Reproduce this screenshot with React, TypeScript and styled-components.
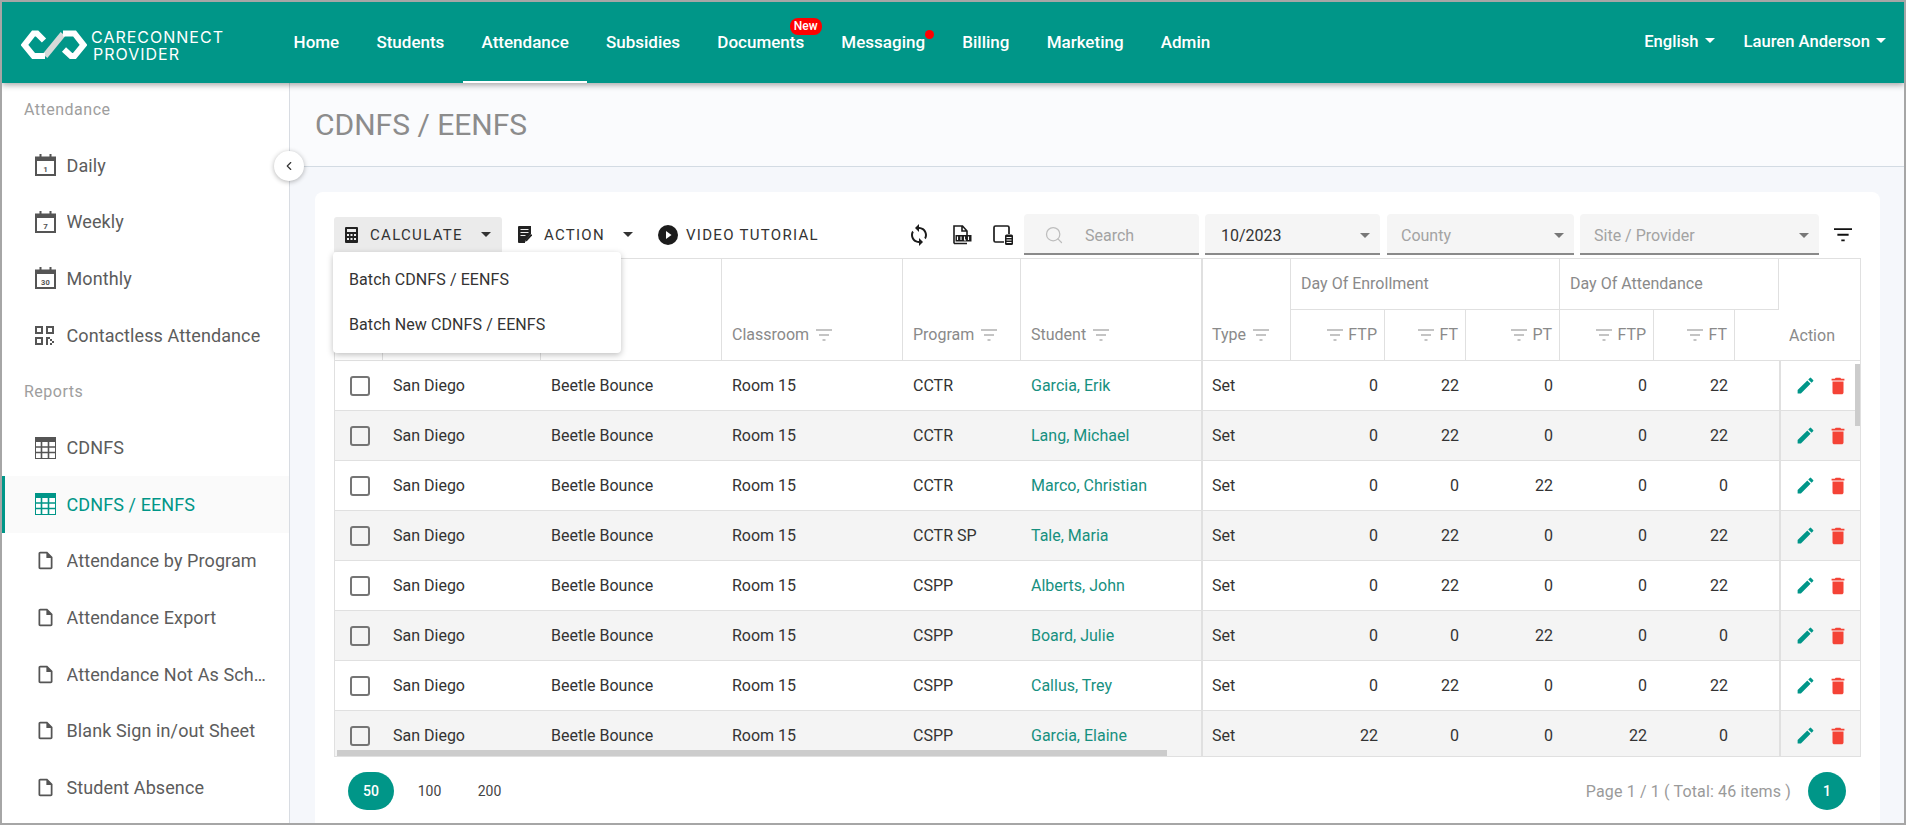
import React from 'react';
import styled, { createGlobalStyle } from 'styled-components';
import { MdDelete, MdEdit, MdOutlineInsertDriveFile, MdSync } from 'react-icons/md';
import { ChevronLeft, Search } from 'lucide-react';

const teal = '#009688';
const lineColor = '#e0e0e0';

const GlobalStyle = createGlobalStyle`
  html, body {
    margin: 0;
    padding: 0;
    background: #fff;
  }
  body {
    font-family: Roboto, "Liberation Sans", sans-serif;
    overflow: hidden;
  }
  * {
    box-sizing: border-box;
  }
`;

const Frame = styled.div`
  width: 1906px;
  height: 825px;
  border: 2px solid #a6a6a6;
  display: flex;
  flex-direction: column;
  overflow: hidden;
`;

const Header = styled.header`
  height: 81px;
  flex: none;
  background: ${teal};
  display: flex;
  align-items: stretch;
  box-shadow: 0 2px 6px rgba(0, 0, 0, 0.35);
  position: relative;
  z-index: 3;
`;

const Logo = styled.div`
  width: 273px;
  flex: none;
  display: flex;
  align-items: center;
  gap: 4px;
  padding: 5px 0 0 19px;
  color: #fff;
`;

const LogoText = styled.div`
  font-family: Inter, "Open Sans", sans-serif;
  font-size: 16px;
  line-height: 17px;
  letter-spacing: 1px;
  font-weight: 400;
  white-space: nowrap;
  padding-top: 2px;
  & > div + div {
    padding-left: 2px;
  }
`;

const Nav = styled.nav`
  display: flex;
  flex: 1;
`;

const NavItem = styled.a<{ $active?: boolean }>`
  position: relative;
  display: flex;
  align-items: flex-start;
  padding: 29px 18.6px 0;
  height: 81px;
  color: #fff;
  font-size: 17px;
  line-height: 22px;
  font-weight: 500;
  border-bottom: 2px solid ${(p) => (p.$active ? '#fff' : 'transparent')};
`;

const NewBadge = styled.span`
  position: absolute;
  top: 16px;
  right: 1px;
  height: 17px;
  width: 32px;
  border-radius: 8px;
  background: #f00;
  color: #fff;
  font-size: 12px;
  line-height: 17px;
  text-align: center;
`;

const Dot = styled.span`
  position: absolute;
  top: 28px;
  right: 10px;
  width: 9px;
  height: 9px;
  border-radius: 50%;
  background: #f00;
`;

const UserMenu = styled.div<{ $gap: number }>`
  display: flex;
  align-items: flex-start;
  gap: 6px;
  padding-top: 29px;
  margin-right: ${(p) => p.$gap}px;
  color: #fff;
  font-size: 16.6px;
  line-height: 22px;
  font-weight: 500;
`;

const Caret = styled.span<{ $color?: string; $size?: number }>`
  display: inline-block;
  flex: none;
  width: 0;
  height: 0;
  border-left: ${(p) => p.$size ?? 5}px solid transparent;
  border-right: ${(p) => p.$size ?? 5}px solid transparent;
  border-top: ${(p) => p.$size ?? 5}px solid ${(p) => p.$color ?? '#fff'};
`;

const NavCaret = styled(Caret)`
  margin-top: 7px;
`;

const Body = styled.div`
  flex: 1;
  display: flex;
  min-height: 0;
  position: relative;
`;

const Sidebar = styled.aside`
  width: 288px;
  flex: none;
  background: #fff;
  border-right: 1px solid #d8dce2;
  overflow: hidden;
`;

const SideLabel = styled.div<{ $top?: number }>`
  height: 54px;
  margin-top: ${(p) => p.$top ?? 0}px;
  padding: 0 0 2px 22px;
  display: flex;
  align-items: center;
  color: #9e9e9e;
  font-size: 16px;
  letter-spacing: 0.5px;
`;

const SideItem = styled.a<{ $active?: boolean }>`
  height: 56.6px;
  display: flex;
  align-items: center;
  padding-left: ${(p) => (p.$active ? 30 : 33)}px;
  border-left: ${(p) => (p.$active ? `3px solid ${teal}` : 'none')};
  background: ${(p) => (p.$active ? '#fafafa' : 'transparent')};
  color: ${(p) => (p.$active ? teal : '#5c5c5c')};
  font-size: 18px;
  letter-spacing: 0.1px;
`;

const SideIcon = styled.span`
  width: 31.5px;
  flex: none;
  display: flex;
  svg {
    display: block;
  }
`;

const SideText = styled.span`
  width: 202px;
  white-space: nowrap;
  overflow: hidden;
  text-overflow: ellipsis;
`;

const CollapseButton = styled.button`
  position: absolute;
  left: 272px;
  top: 68px;
  width: 30px;
  height: 30px;
  padding: 0;
  border: none;
  border-radius: 50%;
  background: #fff;
  color: #333;
  display: flex;
  align-items: center;
  justify-content: center;
  box-shadow: 0 1px 5px rgba(0, 0, 0, 0.3);
`;

const Main = styled.main`
  flex: 1;
  min-width: 0;
  background: #f5f7fb;
  display: flex;
  flex-direction: column;
`;

const TitleBar = styled.div`
  height: 84px;
  flex: none;
  background: #fafbfd;
  border-bottom: 1px solid #d3dbe3;
  padding: 0 25px 0 25px;
  display: flex;
  align-items: center;
`;

const PageTitle = styled.h1`
  margin: 0;
  font-size: 30px;
  font-weight: 400;
  color: #8c8c8c;
`;

const Card = styled.section`
  flex: 1;
  margin: 25px 24px 0 25px;
  padding: 22px 19px 0;
  background: #fff;
  border-radius: 8px 8px 0 0;
`;

const Toolbar = styled.div`
  height: 44px;
  display: flex;
  align-items: flex-start;
`;

const MenuWrap = styled.div<{ $left?: number }>`
  position: relative;
  margin: 3px 0 0 ${(p) => p.$left ?? 0}px;
`;

const ToolButton = styled.button<{ $open?: boolean; $left?: number; $gap?: number }>`
  height: 35px;
  display: flex;
  align-items: center;
  border: none;
  border-radius: 3px 3px 0 0;
  padding: 0 11px 0 ${(p) => p.$left ?? 11}px;
  gap: ${(p) => p.$gap ?? 12}px;
  background: ${(p) => (p.$open ? '#ebebeb' : 'transparent')};
  color: #333;
  font-family: inherit;
  font-size: 15px;
  letter-spacing: 1.3px;
  text-transform: uppercase;
  white-space: nowrap;
`;

const ToolCaret = styled(Caret)`
  margin-left: 6px;
`;

const Dropdown = styled.div`
  position: absolute;
  top: 35px;
  left: -1px;
  width: 288px;
  padding: 6px 0;
  background: #fff;
  border-radius: 4px;
  box-shadow: 0 2px 6px rgba(0, 0, 0, 0.25);
  z-index: 2;
`;

const DropdownItem = styled.a`
  display: block;
  height: 44.5px;
  padding: 0 16px;
  line-height: 44.5px;
  color: #333;
  font-size: 16px;
  letter-spacing: 0.1px;
`;

const IconGroup = styled.div`
  display: flex;
  align-items: center;
  height: 41px;
  margin: 0 11px 0 77px;
  color: #1c1c1c;
  svg {
    display: block;
  }
  & > * + * {
    margin-left: 21px;
  }
`;

const Field = styled.div<{ $width: number; $gap?: number; $left?: number }>`
  width: ${(p) => p.$width}px;
  height: 41px;
  flex: none;
  margin-right: ${(p) => p.$gap ?? 6}px;
  background: #f5f5f5;
  border-bottom: 2px solid #8a8a8a;
  border-radius: 4px 4px 0 0;
  display: flex;
  align-items: center;
  justify-content: space-between;
  padding: 3px 10px 0 ${(p) => p.$left ?? 14}px;
  font-size: 16px;
  color: #333;
`;

const Placeholder = styled.span`
  color: #a3a3a3;
`;

const SearchField = styled(Field)`
  justify-content: flex-start;
  gap: 21px;
  color: #bdbdbd;
`;

const FilterButton = styled.div`
  margin: 14px 0 0 9px;
  color: #111;
  svg {
    display: block;
  }
`;

const TableBox = styled.div`
  position: relative;
  width: 1527px;
  height: 499px;
  border: 1px solid ${lineColor};
  overflow: hidden;
`;

const Grid = styled.table`
  width: 1525px;
  table-layout: fixed;
  border-collapse: separate;
  border-spacing: 0;
  font-size: 16px;
`;

const HeadCell = styled.th<{ $right?: boolean; $thick?: boolean; $plain?: boolean }>`
  height: 51px;
  padding: 0 ${(p) => (p.$right ? 7 : 10)}px 0 ${(p) => (p.$thick ? 9 : 10)}px;
  border-bottom: 1px solid ${lineColor};
  border-right: ${(p) => (p.$plain ? 'none' : `1px solid ${lineColor}`)};
  border-left: ${(p) => (p.$thick ? `2px solid ${lineColor}` : 'none')};
  text-align: ${(p) => (p.$right ? 'right' : 'left')};
  font-weight: 400;
  color: #8a8a8a;
  white-space: nowrap;
`;

const GroupHeadCell = styled(HeadCell)`
  padding-bottom: 2px;
`;

const TallHeadCell = styled(HeadCell)`
  vertical-align: bottom;
  padding-bottom: 15px;
`;

const ActionHeadCell = styled(TallHeadCell)`
  text-align: center;
  padding-right: 26px;
`;

const HeadLabel = styled.span<{ $gap: number }>`
  display: inline-flex;
  align-items: center;
  gap: ${(p) => p.$gap}px;
  line-height: 20px;
`;

const Row = styled.tr<{ $shaded: boolean }>`
  background: ${(p) => (p.$shaded ? '#f4f4f4' : '#fff')};
`;

const Cell = styled.td<{ $right?: boolean; $thick?: boolean }>`
  height: 50px;
  padding: 0 ${(p) => (p.$right ? 7 : 10)}px 0 ${(p) => (p.$thick ? 9 : 10)}px;
  border-bottom: 1px solid ${lineColor};
  border-left: ${(p) => (p.$thick ? `2px solid ${lineColor}` : 'none')};
  text-align: ${(p) => (p.$right ? 'right' : 'left')};
  color: #333;
  white-space: nowrap;
`;

const CheckCell = styled(Cell)`
  padding-left: 15px;
`;

const Checkbox = styled.span`
  display: block;
  width: 20px;
  height: 20px;
  border: 2px solid #757575;
  border-radius: 3px;
`;

const StudentLink = styled.a`
  color: #17907f;
`;

const ActionCell = styled(Cell)`
  padding: 0 0 0 14px;
`;

const ActionIcons = styled.div`
  display: flex;
  align-items: center;
  gap: 11px;
  svg {
    display: block;
  }
`;

const ScrollThumb = styled.div<{ $vertical?: boolean }>`
  position: absolute;
  background: #cccccc;
  ${(p) =>
    p.$vertical
      ? 'right: 0; top: 105px; width: 5px; height: 62px;'
      : 'left: 2px; bottom: 0; height: 6px; width: 830px;'}
`;

const Footer = styled.div`
  display: flex;
  align-items: center;
  justify-content: space-between;
  padding: 15px 15px 0 14px;
`;

const PageSizes = styled.div`
  display: flex;
  gap: 11px;
`;

const PageSize = styled.a<{ $active?: boolean }>`
  width: ${(p) => (p.$active ? 46 : 49)}px;
  height: 38px;
  border-radius: 19px;
  background: ${(p) => (p.$active ? teal : 'transparent')};
  color: ${(p) => (p.$active ? '#fff' : '#444')};
  font-size: 14px;
  font-weight: ${(p) => (p.$active ? 500 : 400)};
  line-height: 38px;
  text-align: center;
`;

const Pager = styled.div`
  display: flex;
  align-items: center;
  gap: 17px;
  color: #9a9a9a;
  font-size: 16px;
  letter-spacing: 0.15px;
`;

const PageNumber = styled.a`
  width: 38px;
  height: 38px;
  border-radius: 50%;
  background: ${teal};
  color: #fff;
  font-size: 14px;
  font-weight: 500;
  line-height: 38px;
  text-align: center;
`;

const LogoMark = () => (
  <svg width="66" height="30" viewBox="0 0 66 30" fill="none">
    <path d="M24 26 L42 4" stroke="#d5dad9" strokeWidth="6" />
    <path d="M23 10.5 L16 3.5 L12.5 3.5 L3.5 15 L12.5 26 L24 26" stroke="#fff" strokeWidth="6" />
    <path d="M43 19.5 L50 26 L53.5 26 L62.5 15 L53.5 3.5 L42 3.5" stroke="#fff" strokeWidth="6" />
  </svg>
);

const CalendarIcon: React.FC<{ day: string }> = ({ day }) => (
  <svg width="21" height="22" viewBox="0 0 21 22">
    <rect x="1" y="3.5" width="19" height="17.5" fill="none" stroke="#555" strokeWidth="2" />
    <rect x="1" y="3" width="19" height="4" fill="#555" />
    <rect x="4.5" y="0" width="2" height="4" fill="#555" />
    <rect x="14.5" y="0" width="2" height="4" fill="#555" />
    <text x="10.5" y="17.5" textAnchor="middle" fontSize={day.length > 1 ? 7.5 : 8} fontWeight="700" fill="#555" fontFamily="Roboto, sans-serif">
      {day}
    </text>
  </svg>
);

const QrIcon = () => (
  <svg width="19" height="19" viewBox="0 0 19 19" fill="#555">
    <path d="M0 0h8v8H0zM2 2v4h4V2z" fillRule="evenodd" />
    <path d="M11 0h8v8h-8zM13 2v4h4V2z" fillRule="evenodd" />
    <path d="M0 11h8v8H0zM2 13v4h4v-4z" fillRule="evenodd" />
    <path d="M11 11h4v2h-2v6h-2zM15 13h2v2h-2zM17 15h2v2h-2zM15 17h2v2h-2z" />
  </svg>
);

const TableIcon: React.FC<{ color: string }> = ({ color }) => (
  <svg width="21" height="22" viewBox="0 0 21 22" fill="none">
    <rect x="0.5" y="0.5" width="20" height="21" fill="#fff" stroke={color} />
    <rect x="0" y="0" width="21" height="5" fill={color} />
    <path d="M0 10h21M0 15.5h21M6.5 5v17M13.5 5v17" stroke={color} strokeWidth="1.6" />
  </svg>
);

const FilterLines: React.FC<{ size?: number; width?: number }> = ({ size = 16, width = 1.2 }) => (
  <svg width={size} height={size * 0.75} viewBox="0 0 16 12" stroke="currentColor" strokeWidth={width} fill="none">
    <path d="M0 1h16M3 6h10M6.5 11h3" />
  </svg>
);

const CalculatorIcon = () => (
  <svg width="13" height="16" viewBox="0 0 13 16">
    <rect width="13" height="16" rx="1" fill="#222" />
    <rect x="2" y="2" width="9" height="3" fill="#eee" />
    <path d="M2 7h2v2H2zM5.5 7h2v2h-2zM9 7h2v2H9zM2 11h2v2H2zM5.5 11h2v2h-2zM9 11h2v2H9z" fill="#eee" />
  </svg>
);

const NoteIcon = () => (
  <svg width="14" height="17" viewBox="0 0 14 17">
    <path d="M1 0h12v8l-6 7v2H1a1 1 0 0 1-1-1V1a1 1 0 0 1 1-1z" fill="#222" />
    <path d="M2.5 3.5h8M2.5 6.5h8M2.5 9.5h5" stroke="#eee" strokeWidth="1.2" />
    <path d="M13 8l1.2 1.2L9 15l-2 .8.6-2z" fill="#222" />
  </svg>
);

const PlayIcon = () => (
  <svg width="20" height="20" viewBox="0 0 20 20">
    <circle cx="10" cy="10" r="10" fill="#1c1c1c" />
    <path d="M8 6l5.5 4L8 14z" fill="#fff" />
  </svg>
);

const XlsIcon = () => (
  <svg width="20" height="20" viewBox="0 0 20 20" fill="none">
    <path d="M2 18.5V1h8.5L15 6v4M10 1v5h5M2 18.5h13" stroke="#1c1c1c" strokeWidth="1.6" />
    <rect x="3.5" y="10" width="16" height="6.5" fill="#1c1c1c" />
    <path d="M5.5 11.5v3.5M9 11.5v3.5M12.5 11.5v3.5h1.5M16.5 11.5v3.5" stroke="#fff" strokeWidth="1.1" />
  </svg>
);

const DeviceIcon = () => (
  <svg width="20" height="20" viewBox="0 0 20 20" fill="none">
    <path d="M11 17H2.5A1.5 1.5 0 0 1 1 15.5V2.5A1.5 1.5 0 0 1 2.5 1h12A1.5 1.5 0 0 1 16 2.5V9" stroke="#1c1c1c" strokeWidth="1.7" />
    <rect x="12" y="9.5" width="8" height="10.5" rx="1.5" fill="#1c1c1c" />
    <path d="M13.5 12.5h5M13.5 15h5M13.5 17.5h5" stroke="#fff" strokeWidth="1" />
  </svg>
);

const numbers = ['ftpE', 'ftE', 'ptE', 'ftpA', 'ftA'] as const;

interface RowData {
  program: string;
  student: string;
  ftpE: number;
  ftE: number;
  ptE: number;
  ftpA: number;
  ftA: number;
}

const rows: RowData[] = [
  { program: 'CCTR', student: 'Garcia, Erik', ftpE: 0, ftE: 22, ptE: 0, ftpA: 0, ftA: 22 },
  { program: 'CCTR', student: 'Lang, Michael', ftpE: 0, ftE: 22, ptE: 0, ftpA: 0, ftA: 22 },
  { program: 'CCTR', student: 'Marco, Christian', ftpE: 0, ftE: 0, ptE: 22, ftpA: 0, ftA: 0 },
  { program: 'CCTR SP', student: 'Tale, Maria', ftpE: 0, ftE: 22, ptE: 0, ftpA: 0, ftA: 22 },
  { program: 'CSPP', student: 'Alberts, John', ftpE: 0, ftE: 22, ptE: 0, ftpA: 0, ftA: 22 },
  { program: 'CSPP', student: 'Board, Julie', ftpE: 0, ftE: 0, ptE: 22, ftpA: 0, ftA: 0 },
  { program: 'CSPP', student: 'Callus, Trey', ftpE: 0, ftE: 22, ptE: 0, ftpA: 0, ftA: 22 },
  { program: 'CSPP', student: 'Garcia, Elaine', ftpE: 22, ftE: 0, ptE: 0, ftpA: 22, ftA: 0 }
];

const columnWidths = [48, 158, 181, 181, 118, 180, 90, 94, 81, 94, 94, 81, 44, 81];

const navItems = ['Home', 'Students', 'Attendance', 'Subsidies', 'Documents', 'Messaging', 'Billing', 'Marketing', 'Admin'];

const fileReports = [
  'Attendance by Program',
  'Attendance Export',
  'Attendance Not As Scheduled',
  'Blank Sign in/out Sheet',
  'Student Absence'
];

const FilterHead: React.FC<{ label: string; before?: boolean }> = ({ label, before }) => (
  <HeadLabel $gap={before ? 5 : 7}>
    {before && <FilterLines />}
    {label}
    {!before && <FilterLines />}
  </HeadLabel>
);

const App: React.FC = () => {
  return (
    <>
      <GlobalStyle />
      <Frame>
        <Header>
          <Logo>
            <LogoMark />
            <LogoText>
              <div>CARECONNECT</div>
              <div>PROVIDER</div>
            </LogoText>
          </Logo>
          <Nav>
            {navItems.map((item) => (
              <NavItem key={item} $active={item === 'Attendance'}>
                {item}
                {item === 'Documents' && <NewBadge>New</NewBadge>}
                {item === 'Messaging' && <Dot />}
              </NavItem>
            ))}
          </Nav>
          <UserMenu $gap={29}>
            English
            <NavCaret />
          </UserMenu>
          <UserMenu $gap={18}>
            Lauren Anderson
            <NavCaret />
          </UserMenu>
        </Header>
        <Body>
          <Sidebar>
            <SideLabel>Attendance</SideLabel>
            <SideItem>
              <SideIcon><CalendarIcon day="1" /></SideIcon>
              <SideText>Daily</SideText>
            </SideItem>
            <SideItem>
              <SideIcon><CalendarIcon day="7" /></SideIcon>
              <SideText>Weekly</SideText>
            </SideItem>
            <SideItem>
              <SideIcon><CalendarIcon day="30" /></SideIcon>
              <SideText>Monthly</SideText>
            </SideItem>
            <SideItem>
              <SideIcon><QrIcon /></SideIcon>
              <SideText>Contactless Attendance</SideText>
            </SideItem>
            <SideLabel $top={2}>Reports</SideLabel>
            <SideItem>
              <SideIcon><TableIcon color="#555" /></SideIcon>
              <SideText>CDNFS</SideText>
            </SideItem>
            <SideItem $active>
              <SideIcon><TableIcon color={teal} /></SideIcon>
              <SideText>CDNFS / EENFS</SideText>
            </SideItem>
            {fileReports.map((report) => (
              <SideItem key={report}>
                <SideIcon><MdOutlineInsertDriveFile size={21} color="#555" /></SideIcon>
                <SideText>{report}</SideText>
              </SideItem>
            ))}
          </Sidebar>
          <CollapseButton>
            <ChevronLeft size={14} strokeWidth={2} />
          </CollapseButton>
          <Main>
            <TitleBar>
              <PageTitle>CDNFS / EENFS</PageTitle>
            </TitleBar>
            <Card>
              <Toolbar>
                <MenuWrap>
                  <ToolButton $open>
                    <CalculatorIcon />
                    Calculate
                    <ToolCaret $color="#333" />
                  </ToolButton>
                  <Dropdown>
                    <DropdownItem>Batch CDNFS / EENFS</DropdownItem>
                    <DropdownItem>Batch New CDNFS / EENFS</DropdownItem>
                  </Dropdown>
                </MenuWrap>
                <MenuWrap $left={5}>
                  <ToolButton>
                    <NoteIcon />
                    Action
                    <ToolCaret $color="#333" />
                  </ToolButton>
                </MenuWrap>
                <MenuWrap>
                  <ToolButton $left={14} $gap={8}>
                    <PlayIcon />
                    Video Tutorial
                  </ToolButton>
                </MenuWrap>
                <IconGroup>
                  <MdSync size={24} />
                  <XlsIcon />
                  <DeviceIcon />
                </IconGroup>
                <SearchField $width={175} $left={20}>
                  <Search size={20} strokeWidth={1.5} />
                  <Placeholder>Search</Placeholder>
                </SearchField>
                <Field $width={175} $gap={7} $left={16}>
                  10/2023
                  <Caret $color="#777" />
                </Field>
                <Field $width={187}>
                  <Placeholder>County</Placeholder>
                  <Caret $color="#777" />
                </Field>
                <Field $width={239}>
                  <Placeholder>Site / Provider</Placeholder>
                  <Caret $color="#777" />
                </Field>
                <FilterButton>
                  <FilterLines size={18} width={1.6} />
                </FilterButton>
              </Toolbar>
              <TableBox>
                <Grid>
                  <colgroup>
                    {columnWidths.map((w, i) => (
                      <col key={i} width={w} />
                    ))}
                  </colgroup>
                  <thead>
                    <tr>
                      <TallHeadCell rowSpan={2} />
                      <TallHeadCell rowSpan={2} />
                      <TallHeadCell rowSpan={2} />
                      <TallHeadCell rowSpan={2}><FilterHead label="Classroom" /></TallHeadCell>
                      <TallHeadCell rowSpan={2}><FilterHead label="Program" /></TallHeadCell>
                      <TallHeadCell rowSpan={2} $plain><FilterHead label="Student" /></TallHeadCell>
                      <TallHeadCell rowSpan={2} $thick><FilterHead label="Type" /></TallHeadCell>
                      <GroupHeadCell colSpan={3}>Day Of Enrollment</GroupHeadCell>
                      <GroupHeadCell colSpan={3}>Day Of Attendance</GroupHeadCell>
                      <ActionHeadCell rowSpan={2} $plain>Action</ActionHeadCell>
                    </tr>
                    <tr>
                      <HeadCell $right><FilterHead label="FTP" before /></HeadCell>
                      <HeadCell $right><FilterHead label="FT" before /></HeadCell>
                      <HeadCell $right><FilterHead label="PT" before /></HeadCell>
                      <HeadCell $right><FilterHead label="FTP" before /></HeadCell>
                      <HeadCell $right><FilterHead label="FT" before /></HeadCell>
                      <HeadCell $plain />
                    </tr>
                  </thead>
                  <tbody>
                    {rows.map((row, i) => (
                      <Row key={row.student} $shaded={i % 2 === 1}>
                        <CheckCell><Checkbox /></CheckCell>
                        <Cell>San Diego</Cell>
                        <Cell>Beetle Bounce</Cell>
                        <Cell>Room 15</Cell>
                        <Cell>{row.program}</Cell>
                        <Cell><StudentLink>{row.student}</StudentLink></Cell>
                        <Cell $thick>Set</Cell>
                        {numbers.map((key) => (
                          <Cell key={key} $right>{row[key]}</Cell>
                        ))}
                        <Cell />
                        <ActionCell $thick>
                          <ActionIcons>
                            <MdEdit size={21} color={teal} />
                            <MdDelete size={22} color="#f44336" />
                          </ActionIcons>
                        </ActionCell>
                      </Row>
                    ))}
                  </tbody>
                </Grid>
                <ScrollThumb $vertical />
                <ScrollThumb />
              </TableBox>
              <Footer>
                <PageSizes>
                  <PageSize $active>50</PageSize>
                  <PageSize>100</PageSize>
                  <PageSize>200</PageSize>
                </PageSizes>
                <Pager>
                  Page 1 / 1 ( Total: 46 items )
                  <PageNumber>1</PageNumber>
                </Pager>
              </Footer>
            </Card>
          </Main>
        </Body>
      </Frame>
    </>
  );
};

export default App;
